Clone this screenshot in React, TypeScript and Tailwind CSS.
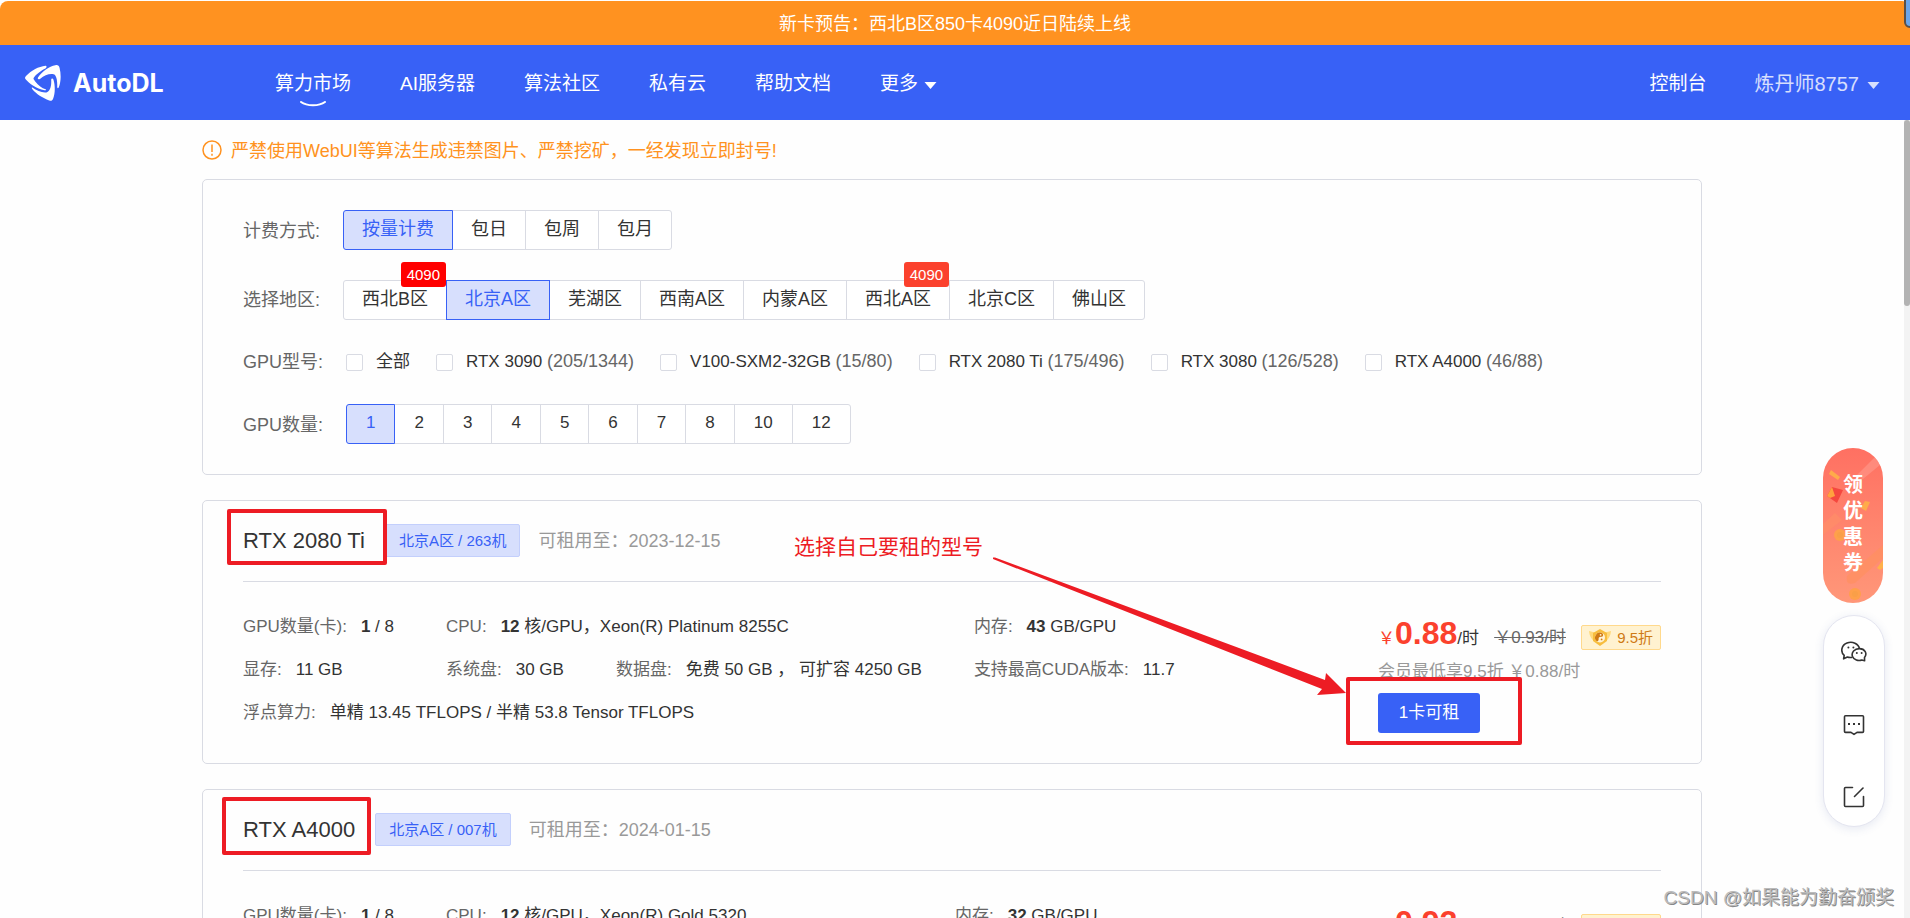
import { useState } from "react";
import type { ReactNode } from "react";

interface Region {
    name: string;
    tag?: string;
    tagClass?: string;
}

interface GpuModel {
    name: string;
    count?: string;
}

interface Machine {
    model: string;
    host: string;
    until: string;
    cpu: string;
    cores: number;
    memory: number;
    vram: string;
    disk: string;
    flops: string;
    price: string;
    oldPrice: string;
    cuda: string;
}

const billing = ["按量计费", "包日", "包周", "包月"];

const regions: Region[] = [
    { name: "西北B区", tag: "4090", tagClass: "bg-[#ff0000]" },
    { name: "北京A区" },
    { name: "芜湖区" },
    { name: "西南A区" },
    { name: "内蒙A区" },
    { name: "西北A区", tag: "4090", tagClass: "bg-[#fb412d]" },
    { name: "北京C区" },
    { name: "佛山区" },
];

const models: GpuModel[] = [
    { name: "全部" },
    { name: "RTX 3090", count: "(205/1344)" },
    { name: "V100-SXM2-32GB", count: "(15/80)" },
    { name: "RTX 2080 Ti", count: "(175/496)" },
    { name: "RTX 3080", count: "(126/528)" },
    { name: "RTX A4000", count: "(46/88)" },
];

const counts = ["1", "2", "3", "4", "5", "6", "7", "8", "10", "12"];

const machines: Machine[] = [
    {
        model: "RTX 2080 Ti",
        host: "北京A区 / 263机",
        until: "2023-12-15",
        cpu: "Xeon(R) Platinum 8255C",
        cores: 12,
        memory: 43,
        vram: "11 GB",
        disk: "免费 50 GB ， 可扩容 4250 GB",
        flops: "单精 13.45 TFLOPS / 半精 53.8 Tensor TFLOPS",
        price: "0.88",
        oldPrice: "0.93",
        cuda: "11.7",
    },
    {
        model: "RTX A4000",
        host: "北京A区 / 007机",
        until: "2024-01-15",
        cpu: "Xeon(R) Gold 5320",
        cores: 12,
        memory: 32,
        vram: "16 GB",
        disk: "免费 50 GB ， 可扩容 86 GB",
        flops: "单精 19.17 TFLOPS / 半精 76.7 Tensor TFLOPS",
        price: "0.92",
        oldPrice: "0.97",
        cuda: "12.0",
    },
];

const Caret = () => (
    <svg width="13" height="7" viewBox="0 0 13 7" fill="currentColor" className="mt-[3px]" aria-hidden="true">
        <path d="M0.5 0h12L6.5 7z" />
    </svg>
);

const Logo = () => (
    <a href="#" className="flex items-center gap-3">
        <svg width="36" height="36" viewBox="0 0 36 36" fill="#fff" aria-hidden="true">
            <path d="M20.5 0.8C22 0.6 21.8 2.6 20.4 3.4C16.4 5.4 10.6 9.4 8.6 13C8.2 14 9.2 15 10.2 16.4C13.4 20.4 17 23 20.6 24.2C21.6 24.8 20.8 25.6 19.4 25.2C11.6 23.6 4 18.4 0.6 14.2C-0.4 13 0 12 1 11C6.6 5.4 13.4 1.6 20.5 0.8Z" />
            <path d="M13 12.4C17 6.4 24.2 1.4 30.4 0.2C32.8-0.2 34 0.6 34.6 3C36.2 9.4 36 17 33.8 22.2C33.2 23.6 32.2 23.4 32.2 22C32.4 17.8 32 12.4 30 10C27.6 7.6 19.4 9.4 15.6 13.6C14.4 15 12 14 13 12.4Z" />
            <path d="M7.4 22.6C11.8 26 16.6 27.8 21.4 27.4C24.8 27 26.6 21.8 26.2 15C26.2 13.2 27.8 13 28.4 14.6C30.4 21 30.2 28.6 28 34C27.2 35.8 26 36.2 24.2 35.4C17.8 33 11 28.8 7.4 24.2C6.6 23 6.6 22 7.4 22.6Z" />
        </svg>
        <span className="text-[25px] leading-8 font-bold font-['Inter',sans-serif]">AutoDL</span>
    </a>
);

const Header = () => (
    <header className="flex h-[75px] shrink-0 items-center bg-[#3861f6] pt-[2px] pr-[30px] pl-[25px] text-[19px] leading-7 text-white">
        <div className="w-[250px] pb-[2px]">
            <Logo />
        </div>
        <nav className="flex flex-1 items-center gap-[49px]">
            <a href="#" className="relative">
                算力市场
                <svg className="absolute top-[31px] left-[25px]" width="26" height="6" viewBox="0 0 26 6" fill="none" aria-hidden="true">
                    <path d="M1 1C7 5.4 19 5.4 25 1" stroke="#fff" strokeWidth="2" strokeLinecap="round" />
                </svg>
            </a>
            <a href="#">AI服务器</a>
            <a href="#">算法社区</a>
            <a href="#">私有云</a>
            <a href="#">帮助文档</a>
            <button className="flex items-center gap-[6px]">
                更多
                <Caret />
            </button>
        </nav>
        <a href="#">控制台</a>
        <button className="ml-[48px] flex items-center gap-2 text-[20px] text-white/80">
            炼丹师8757
            <Caret />
        </button>
    </header>
);

interface OptionProps {
    active: boolean;
    onClick: () => void;
    className: string;
    children: ReactNode;
}

const Option = ({ active, onClick, className, children }: OptionProps) => (
    <button
        onClick={onClick}
        aria-pressed={active}
        className={`relative -ml-px h-10 border pb-[2px] first:ml-0 first:rounded-l-[3px] last:rounded-r-[3px] ${className} ${
            active ? "z-10 border-[#3861f6] bg-[#d7dffd] text-[#3861f6]" : "border-[#d9dbe3] bg-white"
        }`}
    >
        {children}
    </button>
);

const Filters = () => {
    const [pay, setPay] = useState("按量计费");
    const [region, setRegion] = useState("北京A区");
    const [count, setCount] = useState("1");

    return (
        <section className="flex flex-col gap-[30px] rounded-[5px] border border-[#d9dbe3] px-10 py-[30px] text-[18px]">
            <div className="flex items-center">
                <span className="mr-[23px] pt-[2px] text-[#666]">计费方式:</span>
                <div className="flex">
                    {billing.map((item) => (
                        <Option key={item} active={item === pay} onClick={() => setPay(item)} className="px-[18px]">
                            {item}
                        </Option>
                    ))}
                </div>
            </div>

            <div className="flex items-center">
                <span className="mr-[23px] text-[#666]">选择地区:</span>
                <div className="flex">
                    {regions.map((item) => (
                        <Option key={item.name} active={item.name === region} onClick={() => setRegion(item.name)} className="px-[18px]">
                            {item.name}
                            {item.tag && (
                                <span className={`absolute -top-[19px] right-0 rounded-[3px] px-[6px] text-[15px] leading-[25px] text-white ${item.tagClass}`}>
                                    {item.tag}
                                </span>
                            )}
                        </Option>
                    ))}
                </div>
            </div>

            <div className="flex h-6 items-center">
                <span className="mr-[23px] text-[#666]">GPU型号:</span>
                <div className="flex gap-[26px] text-[17px] leading-6">
                    {models.map((item) => (
                        <label key={item.name} className="flex items-center gap-[13px]">
                            <input type="checkbox" className="size-[17px] appearance-none rounded-[2px] border border-[#d9dbe3] bg-white" />
                            <span>
                                {item.name} {item.count && <span className="text-[18px] leading-5 text-[#666]">{item.count}</span>}
                            </span>
                        </label>
                    ))}
                </div>
            </div>

            <div className="flex items-center">
                <span className="mr-[23px] pt-[2px] text-[#666]">GPU数量:</span>
                <div className="flex text-[17px]">
                    {counts.map((item) => (
                        <Option key={item} active={item === count} onClick={() => setCount(item)} className="px-[19px]">
                            {item}
                        </Option>
                    ))}
                </div>
            </div>
        </section>
    );
};

const Field = ({ label, children }: { label: string; children: ReactNode }) => (
    <div className="flex gap-[14px]">
        <span className="text-[#666]">{label}:</span>
        <span>{children}</span>
    </div>
);

const MemberIcon = () => (
    <svg width="22" height="17" viewBox="0 0 22 17" aria-hidden="true">
        <path d="M0 2L6 3.6L16 3.6L22 2C21.6 6.6 19.8 10.4 16.6 12L11 14L5.4 12C2.2 10.4 0.4 6.6 0 2Z" fill="#ffd97a" />
        <path d="M11 0L18 4V12L11 17L4 12V4Z" fill="#f7bd3e" />
        <circle cx="11" cy="8.5" r="5" fill="#fff3d6" />
        <path d="M12.5 3.7A5 5 0 0 0 7.5 12C9 12.6 9.8 11.4 9.6 10C9.4 8.4 10.8 7.6 12.4 7.8C14.6 7.8 14.8 4.6 12.5 3.7Z" fill="#cf7a14" />
        <circle cx="11.6" cy="5.8" r="0.9" fill="#fff3d6" />
        <circle cx="12.6" cy="10.4" r="0.9" fill="#cf7a14" />
    </svg>
);

const MachineCard = ({ item, children }: { item: Machine; children?: ReactNode }) => (
    <article className="relative rounded-[5px] border border-[#d9dbe3] px-10 pb-[29px]">
        <div className="flex h-[81px] items-center border-b border-[#d9dbe3] pb-[2px]">
            <h2 className="text-[22px]">{item.model}</h2>
            <span className="ml-5 rounded-[2px] border border-[#c3cffc] bg-[#d7dffd] px-[13px] text-[15px] leading-[31px] text-[#3861f6]">{item.host}</span>
            <span className="ml-[18px] pt-[2px] text-[18px] text-[#999]">可租用至：{item.until}</span>
        </div>

        <div className="flex justify-between pt-[23px] text-[17px] leading-[43px]">
            <div className="grid auto-cols-max content-start gap-x-[52px]">
                <Field label="GPU数量(卡)">
                    <b>1</b> / 8
                </Field>
                <div className="col-start-2">
                    <Field label="CPU">
                        <b>{item.cores}</b> 核/GPU，{item.cpu}
                    </Field>
                </div>
                <div className="col-start-3">
                    <Field label="内存">
                        <b>{item.memory}</b> GB/GPU
                    </Field>
                </div>
                <div className="col-start-1">
                    <Field label="显存">{item.vram}</Field>
                </div>
                <div className="col-start-2 flex gap-[52px]">
                    <Field label="系统盘">30 GB</Field>
                    <Field label="数据盘">{item.disk}</Field>
                </div>
                <div className="col-start-3">
                    <Field label="支持最高CUDA版本">{item.cuda}</Field>
                </div>
                <div className="col-span-3 col-start-1">
                    <Field label="浮点算力">{item.flops}</Field>
                </div>
            </div>

            <div className="flex w-[283px] flex-col items-start pt-[7px]">
                <div className="flex h-[50px] w-full items-center justify-between whitespace-nowrap">
                    <div className="pb-[2px] leading-[48px]">
                        <span className="text-[#fb412d]">
                            ￥<b className="text-[32px]">{item.price}</b>
                        </span>
                        /时
                    </div>
                    <del className="text-[#666]">￥{item.oldPrice}/时</del>
                    <span className="flex h-[25px] items-center gap-[6px] rounded-[2px] border border-[#ffd98c] bg-[#fff2d0] px-[7px] text-[15px] text-[#cf7a14]">
                        <MemberIcon />
                        9.5折
                    </span>
                </div>
                <p className="leading-5 text-[#999]">会员最低享9.5折 ￥{item.price}/时</p>
                <button className="mt-[11px] h-10 w-[102px] rounded-[3px] bg-[#3861f6] leading-10 text-white">1卡可租</button>
            </div>
        </div>
        {children}
    </article>
);

const CouponButton = () => (
    <button className="relative h-[155px] w-[60px] overflow-hidden rounded-full bg-gradient-to-b from-[#ff7062] to-[#ff9779] text-[20px] leading-[26px] font-bold text-white">
        <svg className="absolute inset-0" width="60" height="155" viewBox="0 0 60 155" aria-hidden="true">
            <path d="M32 29L53 8L57 17L40 31Z" fill="#ff9a8c" opacity=".6" />
            <path d="M0 76L12 65L19 72L0 87Z" fill="#ff9068" opacity=".6" />
            <path d="M24 128L60 97V110L32 135Q22 138 24 128Z" fill="#ff9060" opacity=".7" />
            <path d="M8 22L17 29L15 32L6 26Z" fill="#ffab4a" />
            <path d="M9 39L20 42L14 55L4 48Z" fill="#f5483f" />
            <path d="M4 48L9 39L12 48L7 50Z" fill="#ffa23f" />
            <path d="M42 53L47 54L43 63L38 60Z" fill="#ffab4a" />
            <path d="M54 120L60 112V120L57 122Z" fill="#ffb14a" />
            <circle cx="17" cy="87" r="6" fill="#ffa04b" />
            <circle cx="17" cy="87" r="3" fill="#f99f48" />
            <circle cx="32" cy="146" r="6" fill="#ffa04b" />
            <circle cx="32" cy="146" r="3" fill="#f99f48" />
        </svg>
        <span className="relative mx-auto block w-5 pb-1">领优惠券</span>
    </button>
);

const SideTools = () => (
    <aside className="absolute top-[448px] right-[25px] flex flex-col gap-3">
        <CouponButton />
        <div className="flex h-[212px] w-[62px] flex-col items-center justify-between rounded-full border border-[#e4e5f0] bg-white pt-[25px] pb-[18px] shadow-[0_2px_10px_rgba(60,80,160,0.12)]">
            <button aria-label="微信">
                <svg width="26" height="22" viewBox="0 0 26 22" fill="none" stroke="#333" strokeWidth="1.6" strokeLinejoin="round">
                    <path d="M11.5 16.2C10.4 16.5 8 16.6 6.4 16L2.6 17.8L3.2 14.4C-1 10.6 0.6 4 6 2C11.4 0 17.6 2.6 18.4 7.6" />
                    <path d="M23.6 19.8L23.5 16.6C26.6 12.6 24 7.6 18.4 7.6C13.4 7.6 10.2 11.4 11.4 15.2C12.8 19 17.4 20.4 20.8 19Z" />
                    <g fill="#333" stroke="none">
                        <circle cx="7.4" cy="6.6" r="1" />
                        <circle cx="12.4" cy="6.6" r="1" />
                        <circle cx="15.8" cy="12" r="1" />
                        <circle cx="20.6" cy="12" r="1" />
                    </g>
                </svg>
            </button>
            <button aria-label="在线客服">
                <svg width="22" height="22" viewBox="0 0 22 22" fill="none" stroke="#333" strokeWidth="1.6" strokeLinejoin="round">
                    <path d="M2.5 1.8H19.5Q20.5 1.8 20.5 2.8V17.4Q20.5 18.4 19.5 18.4H14L11 20.4L8 18.4H2.5Q1.5 18.4 1.5 17.4V2.8Q1.5 1.8 2.5 1.8Z" />
                    <path d="M5 10h2M10 10h2M15 10h2" strokeWidth="2" />
                </svg>
            </button>
            <button aria-label="意见反馈">
                <svg width="22" height="22" viewBox="0 0 22 22" fill="none" stroke="#333" strokeWidth="1.6" strokeLinecap="round" strokeLinejoin="round">
                    <path d="M9.5 1.5H2.5Q1.5 1.5 1.5 2.5V19.5Q1.5 20.5 2.5 20.5H19.5Q20.5 20.5 20.5 19.5V10.5" />
                    <path d="M11.5 10.5L20 2" />
                </svg>
            </button>
        </div>
    </aside>
);

export default function App() {
    return (
        <div lang="zh-CN" className="relative flex h-screen flex-col overflow-hidden bg-[#fefefe] pt-px font-['Liberation_Sans','Noto_Sans_CJK_SC',sans-serif] text-[#333]">
            <div className="h-11 shrink-0 rounded-t-lg bg-[#ff9220] text-center text-[18px] leading-[46px] text-white">新卡预告：西北B区850卡4090近日陆续上线</div>
            <div className="absolute -top-1 -right-2 h-8 w-[14px] rounded-bl-md border-2 border-[#5b5048] bg-[#6aa5ea]" />
            <Header />

            <div className="flex min-h-0 flex-1">
                <main className="flex-1 overflow-hidden">
                    <div className="mx-auto flex w-full max-w-[1500px] flex-col gap-[25px]">
                        <div className="-mb-[25px] flex h-[59px] items-center gap-[9px] text-[18px] text-[#ff9220]">
                            <svg width="20" height="20" viewBox="0 0 20 20" fill="none" stroke="#ff9220" strokeWidth="1.5" aria-hidden="true">
                                <circle cx="10" cy="10" r="9" />
                                <path d="M10 4.5V12M10 13.8V15.8" />
                            </svg>
                            <span className="pt-1">严禁使用WebUI等算法生成违禁图片、严禁挖矿，一经发现立即封号!</span>
                        </div>

                        <Filters />

                        <MachineCard item={machines[0]}>
                            <div className="absolute top-2 left-6 h-[56px] w-[160px] rounded-[2px] border-4 border-[#ed1c24]" />
                            <div className="absolute top-[176px] left-[1143px] h-[68px] w-[176px] rounded-[2px] border-4 border-[#ed1c24]" />
                            <p className="absolute top-8 left-[591px] text-[21px] leading-7 text-[#ed1c24]">选择自己要租的型号</p>
                            <svg className="absolute top-[56px] left-[790px]" width="354" height="142" viewBox="0 0 354 142" fill="#ed1c24" aria-hidden="true">
                                <path d="M0 0.5L2 0.5L332 123L333 116L353 136L324 138L329 132L0 2Z" />
                            </svg>
                        </MachineCard>

                        <MachineCard item={machines[1]}>
                            <div className="absolute top-[7px] left-[19px] h-[58px] w-[149px] rounded-[2px] border-4 border-[#ed1c24]" />
                        </MachineCard>
                    </div>
                </main>
                <div className="w-[6px] bg-[#f3f3f3]">
                    <div className="h-[186px] rounded-full bg-[#b3b3b3]" />
                </div>
            </div>

            <SideTools />
            <p className="absolute right-4 bottom-[6px] text-[19px] leading-7 text-[#bbb] [text-shadow:1px_1px_0_#888]">CSDN @如果能为勤奋颁奖</p>
        </div>
    );
}
